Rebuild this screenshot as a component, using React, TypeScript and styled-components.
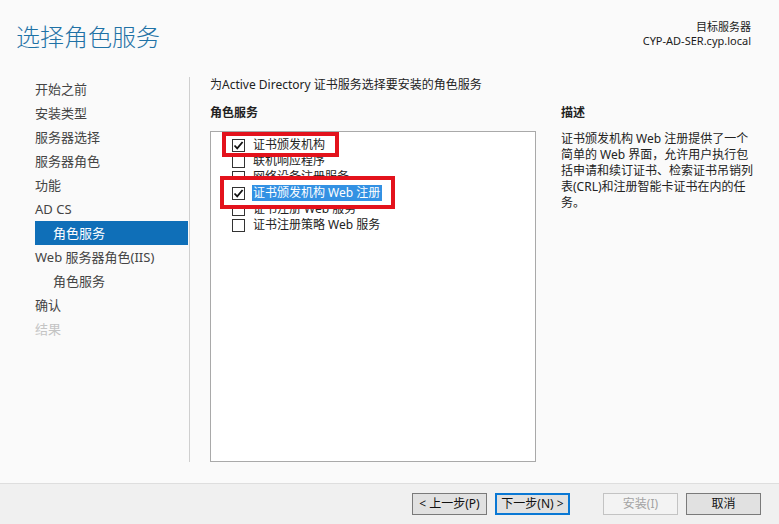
import styled, { createGlobalStyle, css } from 'styled-components'

const GlobalStyle = createGlobalStyle`
  html, body {
    margin: 0;
    padding: 0;
    background: #fafafa;
  }
  body {
    font-family: "Noto Sans", "Noto Sans CJK SC", sans-serif;
    color: #222;
  }
`

const Window = styled.div`
  width: 779px;
  height: 524px;
  display: flex;
  flex-direction: column;
  background: #fafafa;
  overflow: hidden;
`

const Header = styled.header`
  height: 77px;
  display: flex;
  justify-content: space-between;
  align-items: flex-start;
`

const Title = styled.h1`
  margin: 19px 0 0 16px;
  font-family: "Noto Sans CJK SC", sans-serif;
  font-size: 24px;
  font-weight: 300;
  line-height: 34px;
  color: #1f72a6;
`

const Target = styled.div`
  margin: 20px 28px 0 0;
  text-align: right;
  font-size: 11px;
  line-height: 14px;
  color: #1a1a1a;
`

const Main = styled.main`
  flex: 1;
  display: flex;
  padding-bottom: 21px;
`

const Nav = styled.nav`
  width: 190px;
  border-right: 1px solid #cfcfcf;
  display: flex;
  flex-direction: column;
  padding: 0 1px 0 35px;
  box-sizing: border-box;
`

const NavItem = styled.div<{ $sub?: boolean; $active?: boolean; $disabled?: boolean }>`
  height: 24px;
  line-height: 24px;
  font-size: 13px;
  padding-left: ${p => (p.$sub ? 18 : 0)}px;
  color: ${p => (p.$active ? '#fff' : p.$disabled ? '#c4c4c4' : '#444')};
  background: ${p => (p.$active ? '#0f6fb8' : 'transparent')};
  white-space: nowrap;
`

const Content = styled.section`
  flex: 1;
  display: flex;
  flex-direction: column;
  padding-left: 20px;
`

const Intro = styled.div`
  font-size: 12px;
  line-height: 16px;
  margin-bottom: 12px;
  color: #222;
`

const Columns = styled.div`
  flex: 1;
  display: grid;
  grid-template-columns: 326px 1fr;
  column-gap: 25px;
`

const Column = styled.div`
  display: flex;
  flex-direction: column;
`

const Heading = styled.div`
  font-size: 12px;
  font-weight: 700;
  line-height: 16px;
  margin-bottom: 10px;
  color: #222;
`

const ListBox = styled.div`
  flex: 1;
  background: #fff;
  border: 1px solid #a9a9a9;
  padding: 5px 0 0 21px;
  display: flex;
  flex-direction: column;
`

type Mark = { top: number; bottom: number; left: number; width: number }

const Row = styled.div<{ $mark?: Mark }>`
  height: 16px;
  display: flex;
  align-items: center;
  gap: 8px;
  font-size: 12px;
  line-height: 16px;
  color: #222;
  white-space: nowrap;
  ${p =>
    p.$mark &&
    css`
      position: relative;
      z-index: 1;
      &::before {
        content: '';
        position: absolute;
        z-index: -1;
        top: ${p.$mark.top}px;
        bottom: ${p.$mark.bottom}px;
        left: ${p.$mark.left}px;
        width: ${p.$mark.width}px;
        box-sizing: border-box;
        background: #fff;
        border: 4px solid #e3121c;
      }
    `}
`

const Box = styled.span`
  width: 13px;
  height: 13px;
  flex: none;
  box-sizing: border-box;
  border: 1px solid #333;
  background: #fff;
  display: flex;
  align-items: center;
  justify-content: center;
`

const Label = styled.span<{ $selected?: boolean }>`
  padding: 0 2px 0 1px;
  margin-left: -1px;
  background: ${p => (p.$selected ? '#3391e3' : 'transparent')};
  color: ${p => (p.$selected ? '#fff' : 'inherit')};
`

const Desc = styled.div`
  font-size: 12px;
  line-height: 16px;
  color: #222;
  white-space: nowrap;
`

const Footer = styled.footer`
  height: 41px;
  box-sizing: border-box;
  border-top: 1px solid #dedede;
  background: #f0f0f0;
  display: flex;
  align-items: center;
  justify-content: flex-end;
  padding: 0 18px 1px 0;
  gap: 8px;
`

const Button = styled.button<{ $default?: boolean; $gapBefore?: number }>`
  width: 75px;
  height: 22px;
  padding: 0;
  margin-left: ${p => p.$gapBefore ?? 0}px;
  font-family: "Noto Sans", "Noto Sans CJK SC", sans-serif;
  font-size: 12px;
  line-height: 18px;
  color: #111;
  background: #e1e1e1;
  border: 1px solid ${p => (p.$default ? '#0a78d4' : '#7a7a7a')};
  ${p => p.$default && 'box-shadow: inset 0 0 0 1px #0a78d4;'}
  &:disabled {
    background: #f3f3f3;
    border-color: #c3c3c3;
    color: #a3a3a3;
  }
`

const Check = () => (
  <svg width="11" height="11" viewBox="0 0 11 11">
    <path d="M1.5 5.5 L4.2 8.3 L9.6 2" fill="none" stroke="#111" strokeWidth="1.8" />
  </svg>
)

const navItems = [
  { text: '开始之前' },
  { text: '安装类型' },
  { text: '服务器选择' },
  { text: '服务器角色' },
  { text: '功能' },
  { text: 'AD CS' },
  { text: '角色服务', sub: true, active: true },
  { text: 'Web 服务器角色(IIS)' },
  { text: '角色服务', sub: true },
  { text: '确认' },
  { text: '结果', disabled: true },
]

const services: { text: string; checked?: boolean; selected?: boolean; mark?: Mark }[] = [
  { text: '证书颁发机构', checked: true, mark: { top: -5, bottom: -4, left: -10, width: 117 } },
  { text: '联机响应程序' },
  { text: '网络设备注册服务' },
  { text: '证书颁发机构 Web 注册', checked: true, selected: true, mark: { top: -9, bottom: -8, left: -12, width: 175 } },
  { text: '证书注册 Web 服务' },
  { text: '证书注册策略 Web 服务' },
]

export default function App() {
  return (
    <Window>
      <GlobalStyle />
      <Header>
        <Title>选择角色服务</Title>
        <Target>
          <div>目标服务器</div>
          <div>CYP-AD-SER.cyp.local</div>
        </Target>
      </Header>
      <Main>
        <Nav>
          {navItems.map((n, i) => (
            <NavItem key={i} $sub={n.sub} $active={n.active} $disabled={n.disabled}>
              {n.text}
            </NavItem>
          ))}
        </Nav>
        <Content>
          <Intro>为Active Directory 证书服务选择要安装的角色服务</Intro>
          <Columns>
            <Column>
              <Heading>角色服务</Heading>
              <ListBox>
                {services.map((s, i) => (
                  <Row key={i} $mark={s.mark}>
                    <Box>{s.checked && <Check />}</Box>
                    <Label $selected={s.selected}>{s.text}</Label>
                  </Row>
                ))}
              </ListBox>
            </Column>
            <Column>
              <Heading>描述</Heading>
              <Desc>
                证书颁发机构 Web 注册提供了一个
                <br />
                简单的 Web 界面，允许用户执行包
                <br />
                括申请和续订证书、检索证书吊销列
                <br />
                表(CRL)和注册智能卡证书在内的任
                <br />
                务。
              </Desc>
            </Column>
          </Columns>
        </Content>
      </Main>
      <Footer>
        <Button>&lt; 上一步(P)</Button>
        <Button $default>下一步(N) &gt;</Button>
        <Button disabled $gapBefore={25}>安装(I)</Button>
        <Button>取消</Button>
      </Footer>
    </Window>
  )
}
